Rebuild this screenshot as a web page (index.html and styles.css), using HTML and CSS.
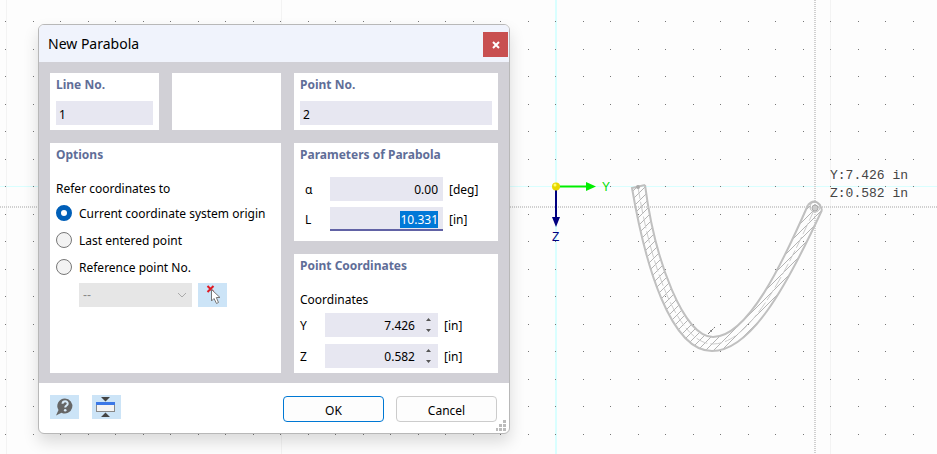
FILE: index.html
```html
<!DOCTYPE html>
<html lang="en">
<head>
  <meta charset="UTF-8">
  <title>New Parabola</title>
  <meta name="viewport" content="width=device-width, initial-scale=1.0">
  <link rel="stylesheet" href="styles.css">
</head>
<body>
  <main class="workspace">
    <svg class="model" width="100%" height="100%">
      <defs>
        <pattern id="grid" width="55" height="55" patternUnits="userSpaceOnUse">
          <path d="M5 21h1v1h-1zM33 21h1v1h-1zM5 49h1v1h-1zM33 49h1v1h-1z" fill="#777"/>
        </pattern>
        <pattern id="hatch" width="8" height="8" patternUnits="userSpaceOnUse">
          <path d="M-1 9L9 -1M-1 1L1 -1M7 9L9 7" stroke="#b4b4b4" stroke-width="1"/>
        </pattern>
      </defs>

      <!-- grid lines and crosshair -->
      <g shape-rendering="crispEdges">
        <path class="major" d="M6.5 0V2000M281.500 0V2000M830.500 0V2000"/>
        <rect class="origin" x="0" y="186" width="100%" height="1"/>
        <rect class="origin" x="555" y="0" width="2" height="100%"/>
        <rect width="100%" height="100%" fill="url(#grid)"/>
        <line class="cross" x1="0" y1="207" x2="100%" y2="207"/>
        <line class="cross" x1="815" y1="0" x2="815" y2="100%"/>
      </g>

      <!-- member along the parabola -->
      <path fill="url(#hatch)" d="M632 188C645 264 670 351 712 351C750 351 785 290 822 210L807 205C783 264 748 337 713 337C684 337 655 262 645 185Z"/>
      <path class="axis-line" d="M638 187C650 263 677 344 713 344C749 344 784 277 815 208"/>
      <path class="edge" d="M645 185C655 262 684 337 713 337C748 337 783 262 808 205"/>
      <path class="edge" d="M645 185L632 188C645 264 670 351 712 351C750 351 785 290 822 210"/>
      <path class="edge" d="M808 205Q814 198 820 205L822 210"/>
      <circle cx="638" cy="187" r="2" fill="#aaa"/>
      <circle cx="815" cy="207" r="5" fill="none" stroke="#bbb" stroke-width="1"/>
      <circle cx="815" cy="208" r="3" fill="#ccc" stroke="#aaa" stroke-width="1"/>
      <path d="M708 334L715 327" stroke="#777" stroke-dasharray="3 1"/>
      <circle cx="711" cy="331" r="1" fill="#777"/>

      <!-- axes -->
      <path d="M556 186.500H588" stroke="#0e0" stroke-width="2"/>
      <path d="M586 182L596 186.500L586 191Z" fill="#0e0"/>
      <path d="M556 187V218" stroke="#000080" stroke-width="2"/>
      <path d="M552 217H560L556 227Z" fill="#000080"/>
      <circle cx="556" cy="186.500" r="4" fill="#e8d800"/>
      <circle cx="555" cy="185" r="1.500" fill="#ffff70"/>
      <text class="axis-name" x="602" y="191" fill="#0d0">Y</text>
      <text class="axis-name" x="552" y="241" fill="#000080">Z</text>

      <text class="readout" x="830" y="179">Y:7.426 in</text>
      <text class="readout" x="830" y="197">Z:0.582 in</text>
    </svg>

    <form class="dialog">
      <header class="titlebar">
        <h1>New Parabola</h1>
        <button type="button" class="close" aria-label="Close">
          <svg width="8" height="8" viewBox="0 0 8 8"><path d="M1 1L7 7M7 1L1 7" stroke="#fff" stroke-width="2"/></svg>
        </button>
      </header>

      <div class="content">
        <div class="column">
          <div class="pair">
            <section class="panel">
              <h2><label for="line-no">Line No.</label></h2>
              <input type="text" class="field" id="line-no" value="1">
            </section>
            <section class="panel"></section>
          </div>

          <section class="panel options">
            <h2>Options</h2>
            <fieldset>
              <legend>Refer coordinates to</legend>
              <label class="choice"><input type="radio" name="refer" checked>Current coordinate system origin</label>
              <label class="choice"><input type="radio" name="refer">Last entered point</label>
              <label class="choice"><input type="radio" name="refer">Reference point No.</label>
            </fieldset>
            <div class="reference">
              <select class="ref-point" aria-label="Reference point No." disabled>
                <option>--</option>
              </select>
              <svg class="chevron" width="10" height="6" viewBox="0 0 10 6"><path d="M1 1L5 5L9 1" fill="none" stroke="#aaa"/></svg>
              <button type="button" class="tool" aria-label="Pick point">
                <svg width="29" height="24" viewBox="0 0 29 24">
                  <path d="M9.500 3L15.500 9M15.500 3L9.500 9" stroke="#e01b24" stroke-width="2"/>
                  <path d="M13.500 6.500V18L16 15.500L18.500 20.500L20.500 19.500L18.300 14.500H22Z" fill="#fff" stroke="#777"/>
                </svg>
              </button>
            </div>
          </section>
        </div>

        <div class="column">
          <section class="panel">
            <h2><label for="point-no">Point No.</label></h2>
            <input type="text" class="field" id="point-no" value="2">
          </section>

          <section class="panel">
            <h2>Parameters of Parabola</h2>
            <div class="rows params">
              <label for="alpha">α</label>
              <input type="text" class="field number" id="alpha" value="0.00">
              <span>[deg]</span>
              <label for="length">L</label>
              <input type="text" class="field number" id="length" value="10.331">
              <span>[in]</span>
            </div>
          </section>

          <section class="panel fill">
            <h2>Point Coordinates</h2>
            <p>Coordinates</p>
            <div class="rows coords">
              <label for="coord-y">Y</label>
              <div class="spin">
                <input type="text" class="field number" id="coord-y" value="7.426">
                <svg width="5" height="14" viewBox="0 0 5 14"><path d="M0 3L2.500 0L5 3ZM0 11L2.500 14L5 11Z" fill="#555"/></svg>
              </div>
              <span>[in]</span>
              <label for="coord-z">Z</label>
              <div class="spin">
                <input type="text" class="field number" id="coord-z" value="0.582">
                <svg width="5" height="14" viewBox="0 0 5 14"><path d="M0 3L2.500 0L5 3ZM0 11L2.500 14L5 11Z" fill="#555"/></svg>
              </div>
              <span>[in]</span>
            </div>
          </section>
        </div>
      </div>

      <footer class="actions">
        <button type="button" class="tool" aria-label="Help">
          <svg width="29" height="24" viewBox="0 0 29 24">
            <path d="M15 3.500a7.500 7.500 0 1 1-3.500 14.200L6 20.500L8.500 15A7.500 7.500 0 0 1 15 3.500Z" fill="#666"/>
            <path d="M12.500 8.800C12.700 5.500 18 5.600 17.700 8.800C17.500 10.600 15.200 10.400 15.200 12.600" fill="none" stroke="#d8eaf8" stroke-width="2"/>
            <circle cx="15.200" cy="15.200" r="1.300" fill="#d8eaf8"/>
          </svg>
        </button>
        <button type="button" class="tool" aria-label="Collapse dialog">
          <svg width="29" height="24" viewBox="0 0 29 24">
            <path d="M9 2H18L13.500 6.500ZM9 22H18L13.500 17.500Z" fill="#444"/>
            <rect x="4.500" y="7.500" width="18" height="9" fill="#f4f4f4" stroke="#888"/>
            <rect x="4" y="7" width="19" height="3" fill="#3b78e7"/>
          </svg>
        </button>
        <button type="submit" class="btn primary">OK</button>
        <button type="button" class="btn">Cancel</button>
      </footer>
      <svg class="grip" width="11" height="11" viewBox="0 0 11 11"><path d="M7 0h3v3h-3zM3 4h3v3h-3zM7 4h3v3h-3zM0 8h2v3h-2zM3 8h3v3h-3zM7 8h3v3h-3z" fill="#bbb"/></svg>
    </form>
  </main>

  <script>
    const lengthField = document.getElementById('length');
    lengthField.focus();
    lengthField.select();
  </script>
</body>
</html>
```
FILE: styles.css
```css
* {
  box-sizing: border-box;
}

body {
  margin: 0;
  font-family: "Noto Sans", "Open Sans", sans-serif;
  font-size: 12px;
  line-height: 17px;
  color: #000;
  background-color: #fdfdfd;
}

h1, h2, p, fieldset, legend {
  margin: 0;
  padding: 0;
  border: none;
}

button, input, select {
  font: inherit;
  color: inherit;
}

.workspace {
  position: relative;
  height: 100vh;
  overflow: hidden;
}

.model {
  display: block;
}

.major {
  stroke: #f3f3f3;
}

.origin {
  fill: #d9ffff;
}

.cross {
  stroke: #d0d0d0;
  stroke-width: 2;
  stroke-dasharray: 1 1;
}

.edge {
  fill: none;
  stroke: #c0c0c0;
  stroke-width: 2;
}

.axis-line {
  fill: none;
  stroke: #ccc;
  stroke-dasharray: 12 3;
}

.axis-name {
  font-family: "Liberation Sans", Arial, sans-serif;
  font-size: 12px;
}

.readout {
  font-family: "Liberation Mono", "Courier New", monospace;
  font-size: 13px;
  fill: #444;
}

/* dialog window */
.dialog {
  position: absolute;
  top: 24px;
  left: 38px;
  width: 472px;
  max-width: 100%;
  background-color: #fff;
  border: 1px solid #b8b8b8;
  border-radius: 6px;
  box-shadow: 0 8px 16px rgba(0,0,0,0.14);
  overflow: hidden;
}

.titlebar {
  display: flex;
  align-items: center;
  justify-content: space-between;
  height: 37px;
  padding: 2px 1px 0 9px;
  background-color: #f0f3fc;
}

.titlebar h1 {
  padding-bottom: 2px;
  font-size: 14px;
  font-weight: 400;
}

.close {
  display: flex;
  align-items: center;
  justify-content: center;
  width: 25px;
  height: 25px;
  padding: 0;
  border: none;
  background-color: #c84f50;
}

.content {
  display: grid;
  grid-template-columns: 1fr 204px;
  gap: 13px;
  padding: 11px 11px 10px;
  background-color: #d1d0d6;
}

.column {
  display: flex;
  flex-direction: column;
  gap: 13px;
}

.pair {
  display: grid;
  grid-template-columns: 1fr 1fr;
  gap: 13px;
}

.panel {
  padding: 3px 6px 5px;
  background-color: #fff;
}

.options, .fill {
  flex: 1;
}

.panel h2 {
  margin-bottom: 8px;
  font-size: 12px;
  font-weight: 700;
  color: #5f6e98;
}

.field {
  display: block;
  width: 100%;
  height: 24px;
  padding: 2px 3px 0;
  border: none;
  border-radius: 0;
  outline: none;
  background-color: #e7e7f1;
}

.number {
  padding: 1px 5px 0;
  text-align: right;
}

.number:focus {
  padding-top: 2px;
  border-bottom: 2px solid #6162a5;
}

.field::selection {
  color: #fff;
  background-color: #0078d7;
}

legend {
  padding-top: 7px;
  line-height: 22px;
}

.choice {
  display: flex;
  align-items: center;
  gap: 7px;
  height: 27px;
}

.choice input {
  appearance: none;
  width: 16px;
  height: 16px;
  margin: 0 0 2px;
  border: 1px solid #777;
  border-radius: 50%;
  background-color: #f3f3f3;
}

.choice input:checked {
  border: 5px solid #005fb8;
  background-color: #fff;
}

.reference {
  display: flex;
  align-items: center;
  margin: 2px 0 0 23px;
}

.ref-point {
  appearance: none;
  width: 113px;
  height: 24px;
  padding: 0 4px;
  border: none;
  border-radius: 0;
  font-family: "Liberation Sans", Arial, sans-serif;
  color: #888;
  background-color: #e6e6e6;
  opacity: 1;
}

.chevron {
  margin: 0 11px 0 -15px;
}

.tool {
  width: 29px;
  height: 24px;
  padding: 0;
  border: none;
  background-color: #cce4f7;
}

.tool svg {
  display: block;
}

.rows {
  display: grid;
  align-items: center;
}

.params {
  grid-template-columns: 25px 113px 1fr;
  gap: 6px 0;
  padding: 6px 0 5px 5px;
}

.coords {
  grid-template-columns: 25px 113px 1fr;
  gap: 7px 0;
}

.rows span {
  padding-left: 6px;
}

.fill p {
  padding: 6px 0 1px;
  line-height: 24px;
}

.spin {
  display: flex;
  align-items: center;
  background-color: #e7e7f1;
}

.spin .number {
  flex: 1;
  min-width: 0;
}

.spin svg {
  margin: 0 7px 0 6px;
}

.actions {
  display: flex;
  align-items: flex-start;
  gap: 12px;
  padding: 12px 12px 11px 11px;
}

.actions .tool {
  margin-right: 1px;
}

.btn {
  width: 101px;
  height: 26px;
  margin-top: 1px;
  padding: 2px 0 0;
  border: 1px solid #ccc;
  border-radius: 4px;
  background-color: #fdfdfd;
}

.primary {
  margin-left: auto;
  border-color: #0078d4;
}

.grip {
  position: absolute;
  right: 2px;
  bottom: 2px;
}

@media (max-width: 520px) {
  .dialog {
    left: 0;
  }

  .content {
    grid-template-columns: 1fr;
  }
}
```
